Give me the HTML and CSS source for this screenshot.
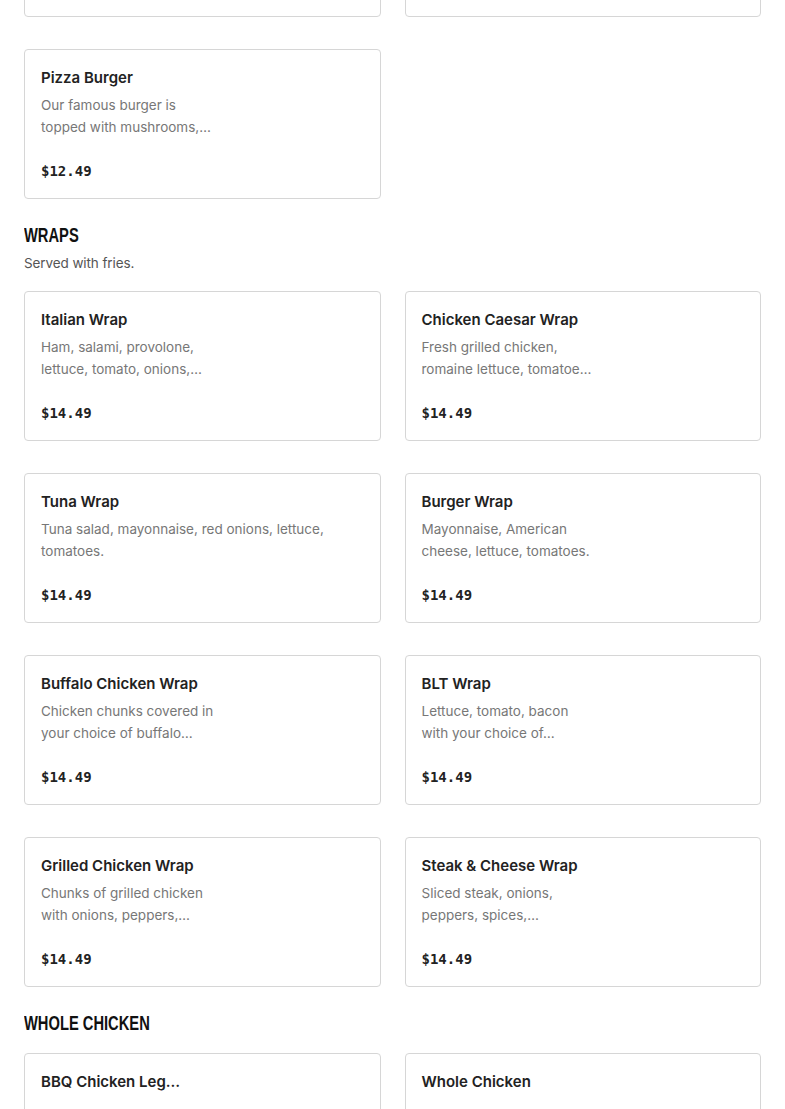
FILE: index.html
```html
<!DOCTYPE html>
<html lang="en">
<head>
<meta charset="utf-8">
<title>Menu</title>
<link rel="stylesheet" href="styles.css">
</head>
<body>
<main class="menu">
  <section class="section section-prev">
    <div class="grid">
      <article class="card">
        <h3 class="card-title">Mushroom Burger</h3>
        <p class="card-desc">Our famous burger is<br>topped with sautéed…</p>
        <p class="card-price">$12.49</p>
      </article>
      <article class="card">
        <h3 class="card-title">Bacon Burger</h3>
        <p class="card-desc">Our famous burger is<br>topped with crispy…</p>
        <p class="card-price">$12.49</p>
      </article>
      <article class="card">
        <h3 class="card-title">Pizza Burger</h3>
        <p class="card-desc">Our famous burger is<br>topped with mushrooms,…</p>
        <p class="card-price">$12.49</p>
      </article>
    </div>
  </section>

  <section class="section">
    <h2 class="section-title"><span class="section-title-text">Wraps</span></h2>
    <p class="section-desc">Served with fries.</p>
    <div class="grid">
      <article class="card">
        <h3 class="card-title">Italian Wrap</h3>
        <p class="card-desc">Ham, salami, provolone,<br>lettuce, tomato, onions,…</p>
        <p class="card-price">$14.49</p>
      </article>
      <article class="card">
        <h3 class="card-title">Chicken Caesar Wrap</h3>
        <p class="card-desc">Fresh grilled chicken,<br>romaine lettuce, tomatoe…</p>
        <p class="card-price">$14.49</p>
      </article>
      <article class="card">
        <h3 class="card-title">Tuna Wrap</h3>
        <p class="card-desc">Tuna salad, mayonnaise, red onions, lettuce,<br>tomatoes.</p>
        <p class="card-price">$14.49</p>
      </article>
      <article class="card">
        <h3 class="card-title">Burger Wrap</h3>
        <p class="card-desc">Mayonnaise, American<br>cheese, lettuce, tomatoes.</p>
        <p class="card-price">$14.49</p>
      </article>
      <article class="card">
        <h3 class="card-title">Buffalo Chicken Wrap</h3>
        <p class="card-desc">Chicken chunks covered in<br>your choice of buffalo…</p>
        <p class="card-price">$14.49</p>
      </article>
      <article class="card">
        <h3 class="card-title">BLT Wrap</h3>
        <p class="card-desc">Lettuce, tomato, bacon<br>with your choice of…</p>
        <p class="card-price">$14.49</p>
      </article>
      <article class="card">
        <h3 class="card-title">Grilled Chicken Wrap</h3>
        <p class="card-desc">Chunks of grilled chicken<br>with onions, peppers,…</p>
        <p class="card-price">$14.49</p>
      </article>
      <article class="card">
        <h3 class="card-title">Steak &amp; Cheese Wrap</h3>
        <p class="card-desc">Sliced steak, onions,<br>peppers, spices,…</p>
        <p class="card-price">$14.49</p>
      </article>
    </div>
  </section>

  <section class="section">
    <h2 class="section-title"><span class="section-title-text">Whole Chicken</span></h2>
    <div class="grid">
      <article class="card">
        <h3 class="card-title">BBQ Chicken Leg…</h3>
        <p class="card-desc">&nbsp;<br>&nbsp;</p>
        <p class="card-price">&nbsp;</p>
      </article>
      <article class="card">
        <h3 class="card-title">Whole Chicken</h3>
        <p class="card-desc">&nbsp;<br>&nbsp;</p>
        <p class="card-price">&nbsp;</p>
      </article>
    </div>
  </section>
</main>
</body>
</html>
```

FILE: styles.css
```css
* { box-sizing: border-box; }

html, body {
  margin: 0;
  padding: 0;
  background: #ffffff;
}

body {
  font-family: "Inter", "Liberation Sans", sans-serif;
  color: #1f1f1f;
  overflow: hidden;
}

.menu {
  padding: 0 24px;
}

.section-prev {
  margin-top: -133px;
}

.section {
  margin-bottom: 22px;
}

.section-title {
  margin: 0 0 16px;
  font-family: "Liberation Sans", "Arial", sans-serif;
  font-weight: 700;
  font-size: 21px;
  line-height: 28px;
  text-transform: uppercase;
  color: #111111;
}

.section-title-text {
  display: inline-block;
  transform: scaleX(0.7);
  transform-origin: left center;
}

.section-desc {
  margin: -12px 0 18px;
  font-size: 13.5px;
  line-height: 20px;
  letter-spacing: -0.1px;
  color: #555555;
}

.grid {
  display: grid;
  grid-template-columns: 1fr 1fr;
  column-gap: 24px;
  row-gap: 32px;
}

.card {
  border: 1px solid #d6d6d6;
  border-radius: 4px;
  padding: 16px;
  height: 150px;
  display: flex;
  flex-direction: column;
}

.card-title {
  margin: 0 0 4px;
  font-size: 15px;
  font-weight: 600;
  line-height: 24px;
  color: #222222;
}

.card-desc {
  margin: 0;
  font-size: 13.5px;
  line-height: 22px;
  color: #777777;
}

.card-price {
  margin: auto 0 0;
  font-family: "DejaVu Sans Mono", "Liberation Mono", monospace;
  font-weight: 700;
  font-size: 14px;
  line-height: 22px;
  color: #222222;
}
```
